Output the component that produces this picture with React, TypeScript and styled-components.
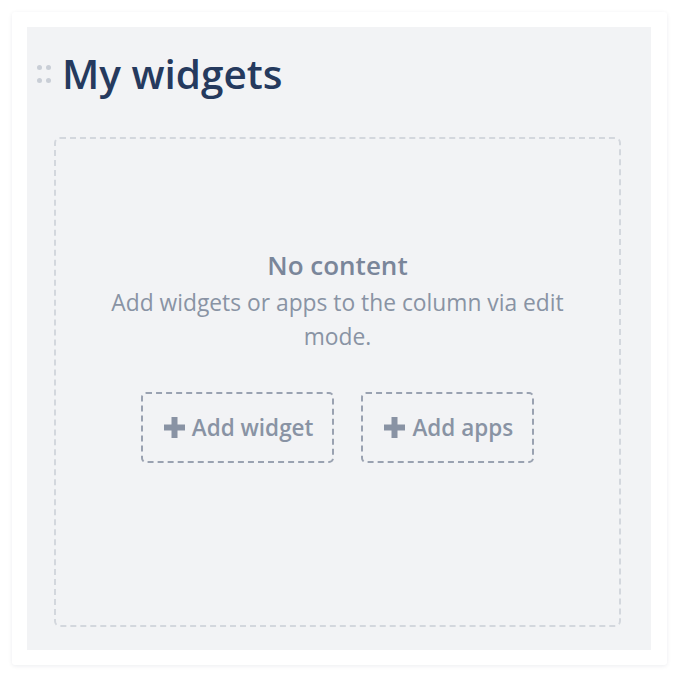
import styled, { createGlobalStyle } from "styled-components";
import * as React from "react";

const GlobalStyle = createGlobalStyle`
    html, body {
        margin: 0;
        padding: 0;
        background: #ffffff;
    }
    body {
        font-family: "Open Sans", "Noto Sans", sans-serif;
    }
`;

const PlusIcon = () => (
    <svg width="21" height="21" viewBox="0 0 21 21" aria-hidden="true">
        <path d="M7.5 0h6v7.5H21v6h-7.5V21h-6v-7.5H0v-6h7.5z" fill="currentColor" />
    </svg>
);

const DragHandle = () => (
    <Handle>
        <Dot />
        <Dot />
        <Dot />
        <Dot />
    </Handle>
);

export default function App() {
    return (
        <>
            <GlobalStyle />
            <Page>
                <Card>
                    <Column>
                        <TitleRow>
                            <DragHandle />
                            <Title>My widgets</Title>
                        </TitleRow>
                        <DropZone>
                            <EmptyTitle>No content</EmptyTitle>
                            <EmptyText>Add widgets or apps to the column via edit mode.</EmptyText>
                            <Actions>
                                <AddButton>
                                    <PlusIcon />
                                    Add widget
                                </AddButton>
                                <AddButton>
                                    <PlusIcon />
                                    Add apps
                                </AddButton>
                            </Actions>
                        </DropZone>
                    </Column>
                </Card>
            </Page>
        </>
    );
}

const Page = styled.div`
    width: 678px;
    height: 678px;
    padding: 12px 11px 13px 12px;
    box-sizing: border-box;
`;

const Card = styled.div`
    background: #ffffff;
    padding: 15px 16px 15px 15px;
    border-radius: 3px;
    box-shadow: 0 1px 4px rgba(9, 30, 66, 0.08);
    box-sizing: border-box;
`;

const Column = styled.div`
    background: #f2f3f5;
    padding: 22px 30px 23px 27px;
    display: flex;
    flex-direction: column;
    box-sizing: border-box;
`;

const TitleRow = styled.div`
    display: flex;
    align-items: center;
    margin-left: -17px;
    gap: 11px;
    height: 50px;
    margin-bottom: 38px;
`;

const Handle = styled.div`
    display: grid;
    grid-template-columns: 5px 5px;
    column-gap: 4px;
    row-gap: 8px;
`;

const Dot = styled.span`
    width: 5px;
    height: 5px;
    border-radius: 50%;
    background: #c9ced6;
`;

const Title = styled.h1`
    margin: 0;
    font-size: 40.5px;
    font-weight: 600;
    color: #253a5e;
    line-height: 50px;
`;

const DropZone = styled.div`
    height: 490px;
    border: 2px dashed #d3d7dd;
    border-radius: 6px;
    box-sizing: border-box;
    display: flex;
    flex-direction: column;
    align-items: center;
    padding: 110px 40px 0;
    text-align: center;
`;

const EmptyTitle = styled.div`
    font-size: 26px;
    font-weight: 600;
    color: #7a869a;
    line-height: 32px;
`;

const EmptyText = styled.div`
    max-width: 470px;
    font-size: 22.8px;
    color: #8993a4;
    line-height: 34px;
    margin-top: 5px;
`;

const Actions = styled.div`
    display: flex;
    gap: 27px;
    margin-top: 38px;
`;

const AddButton = styled.div`
    height: 71px;
    padding: 0 19px 0 21px;
    border: 2px dashed #9aa2b1;
    border-radius: 5px;
    box-sizing: border-box;
    display: flex;
    align-items: center;
    gap: 7px;
    font-size: 22.5px;
    font-weight: 600;
    color: #8993a4;
    cursor: pointer;
`;
